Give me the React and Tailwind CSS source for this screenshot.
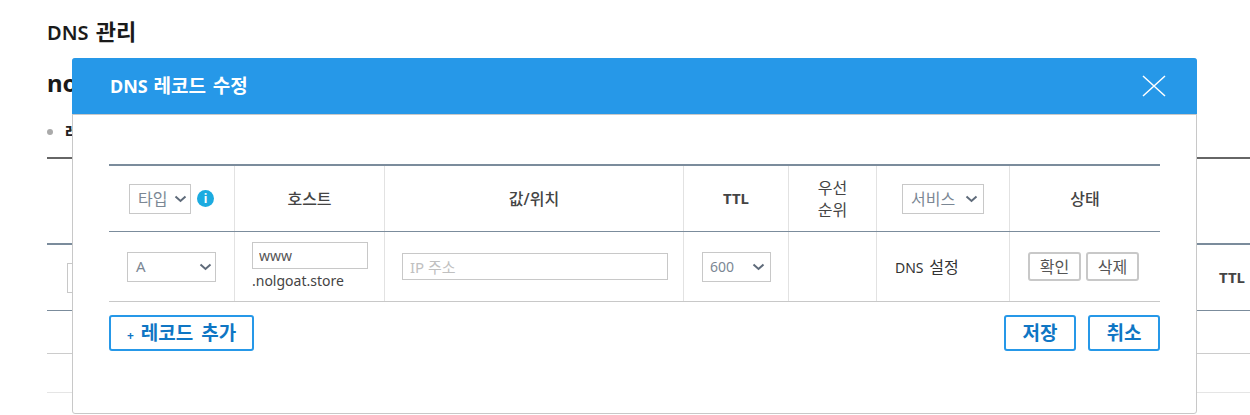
import React from "react";

const font = { fontFamily: '"Noto Sans", "Noto Sans CJK KR", sans-serif' };

const Chevron = ({ className = "" }) => (
	<svg width="13" height="8" viewBox="0 0 13 8" className={className} fill="none">
		<path d="M1.5 1.5L6.5 6L11.5 1.5" stroke="#5f6b7a" strokeWidth="2" />
	</svg>
);

const Select = ({ label, className = "", labelClass = "text-sm" }) => (
	<div className={`flex items-center justify-between border border-[#c8c8c8] bg-white ${className}`}>
		<span className={`leading-none text-[#7b8794] ${labelClass}`}>{label}</span>
		<Chevron />
	</div>
);

const Background = () => (
	<div className="pl-[47px] pt-[18px]">
		<h1 className="text-[20px] leading-[27px] font-semibold text-[#1a1a1a] [word-spacing:2px]">
			DNS <span className="text-[22px]">관리</span>
		</h1>
		<h2 className="mt-[22px] text-2xl leading-[30px] font-bold text-[#1a1a1a]">nolgoat.store</h2>
		<div className="mt-[24px] flex items-center h-[20px]">
			<span className="w-[6px] h-[6px] rounded-full bg-[#aaaaaa]" />
			<span className="ml-[12px] text-base font-bold text-[#222222]">레코드</span>
		</div>
		<div className="mt-[15px] h-[86px] border-t-2 border-[#666666]" />
		<div className="h-[68px] border-t-2 border-[#7b8c9c] border-b border-b-[#7b8c9c] flex items-center justify-between pl-[20px]">
			<div className="w-[60px] h-[30px] border border-[#c8c8c8]" />
			<span className="mr-[5px] text-[15px] font-bold text-[#444444]">TTL</span>
		</div>
		<div className="h-[43px] border-b border-[#cccccc]" />
		<div className="h-[39px] border-b border-[#e5e5e5]" />
	</div>
);

const Modal = () => (
	<div className="absolute left-[72px] top-[58px] w-[1125px] h-[356px] bg-white border border-[#c8c8c8] rounded-[3px]">
		<div className="-mx-px -mt-px h-[56px] bg-[#2698e8] rounded-t-[3px] flex items-center justify-between pl-[38px] pr-[31px]">
			<span className="text-[18px] font-bold text-white [word-spacing:1px]">
				DNS <span className="text-[19px] [word-spacing:2px]">레코드 수정</span>
			</span>
			<svg width="24" height="22" viewBox="0 0 24 22" fill="none">
				<path d="M1 1L23 21M23 1L1 21" stroke="#ffffff" strokeWidth="1.5" />
			</svg>
		</div>
		<div className="h-px bg-[#c8c8c8] -mx-px" />

		<div className="ml-[36px] mt-[49px] w-[1051px]">
			{/* header row */}
			<div className="grid grid-cols-[126px_150px_299px_105px_88px_133px_150px] h-[68px] border-t-2 border-[#7b8c9c] border-b border-b-[#7b8c9c] text-base text-[#444444]">
				<div className="flex items-center pl-[20px] border-r border-[#e2e2e2]">
					<Select label="타입" labelClass="text-base" className="w-[62px] h-[30px] pl-[8px] pr-[3px]" />
					<span className="ml-[6px] w-[17px] h-[17px] rounded-full bg-[#1cabe0] text-white text-xs font-bold flex items-center justify-center">i</span>
				</div>
				<div className="flex items-center justify-center border-r border-[#e2e2e2] font-medium">호스트</div>
				<div className="flex items-center justify-center border-r border-[#e2e2e2] font-medium">값/위치</div>
				<div className="flex items-center justify-center border-r border-[#e2e2e2] text-[15px] font-bold">TTL</div>
				<div className="flex items-center justify-center border-r border-[#e2e2e2] text-center leading-[22px]">우선<br />순위</div>
				<div className="flex items-center justify-center border-r border-[#e2e2e2]">
					<Select label="서비스" labelClass="text-base" className="w-[82px] h-[30px] pl-[8px] pr-[5px]" />
				</div>
				<div className="flex items-center justify-center font-medium">상태</div>
			</div>
			{/* record row */}
			<div className="grid grid-cols-[126px_150px_299px_105px_88px_133px_150px] h-[70px] border-b border-[#c8c8c8] text-sm text-[#444444]">
				<div className="flex items-center pl-[18px] border-r border-[#e2e2e2]">
					<Select label="A" labelClass="text-[15px]" className="w-[89px] h-[30px] pl-[8px] pr-[3px]" />
				</div>
				<div className="flex flex-col justify-center pl-[17px] border-r border-[#e2e2e2]">
					<input readOnly value="www" className="w-[116px] h-[27px] border border-[#c8c8c8] px-[6px] text-sm text-[#555555] outline-none" />
					<span className="mt-[2px] text-sm leading-[20px] text-[#444444]">.nolgoat.store</span>
				</div>
				<div className="flex items-center pl-[17px] border-r border-[#e2e2e2]">
					<input readOnly placeholder="IP 주소" className="w-[266px] h-[27px] border border-[#c8c8c8] px-[7px] text-[15px] placeholder:text-[#c0c0c0] outline-none" />
				</div>
				<div className="flex items-center pl-[18px] border-r border-[#e2e2e2]">
					<Select label="600" className="w-[69px] h-[30px] pl-[7px] pr-[5px]" />
				</div>
				<div className="border-r border-[#e2e2e2]" />
				<div className="flex items-center pl-[18px] border-r border-[#e2e2e2] text-[#333333]">
					<span className="[word-spacing:2px]">DNS <span className="text-base">설정</span></span>
				</div>
				<div className="flex items-center pl-[18px] gap-[5px]">
					<button className="w-[53px] h-[29px] border-2 border-[#c8c8c8] rounded-[3px] text-base leading-none text-[#555555]">확인</button>
					<button className="w-[53px] h-[29px] border-2 border-[#c8c8c8] rounded-[3px] text-base leading-none text-[#555555]">삭제</button>
				</div>
			</div>
			{/* actions */}
			<div className="mt-[13px] flex justify-between">
				<button className="w-[145px] h-[36px] border-2 border-[#2698e8] rounded-[3px] flex items-center justify-center gap-[7px] text-[#0f76c4] font-bold text-[19px] leading-none [word-spacing:3px]">
					<span className="text-xs leading-none mt-[5px]">+</span>레코드 추가
				</button>
				<div className="flex gap-[12px]">
					<button className="w-[72px] h-[36px] border-2 border-[#2698e8] rounded-[3px] text-[#0f76c4] font-bold text-[19px] leading-none">저장</button>
					<button className="w-[72px] h-[36px] border-2 border-[#2698e8] rounded-[3px] text-[#0f76c4] font-bold text-[19px] leading-none">취소</button>
				</div>
			</div>
		</div>
	</div>
);

export default function App() {
	return (
		<div className="relative w-[1250px] h-[415px] overflow-hidden bg-white" style={font}>
			<Background />
			<Modal />
		</div>
	);
}
